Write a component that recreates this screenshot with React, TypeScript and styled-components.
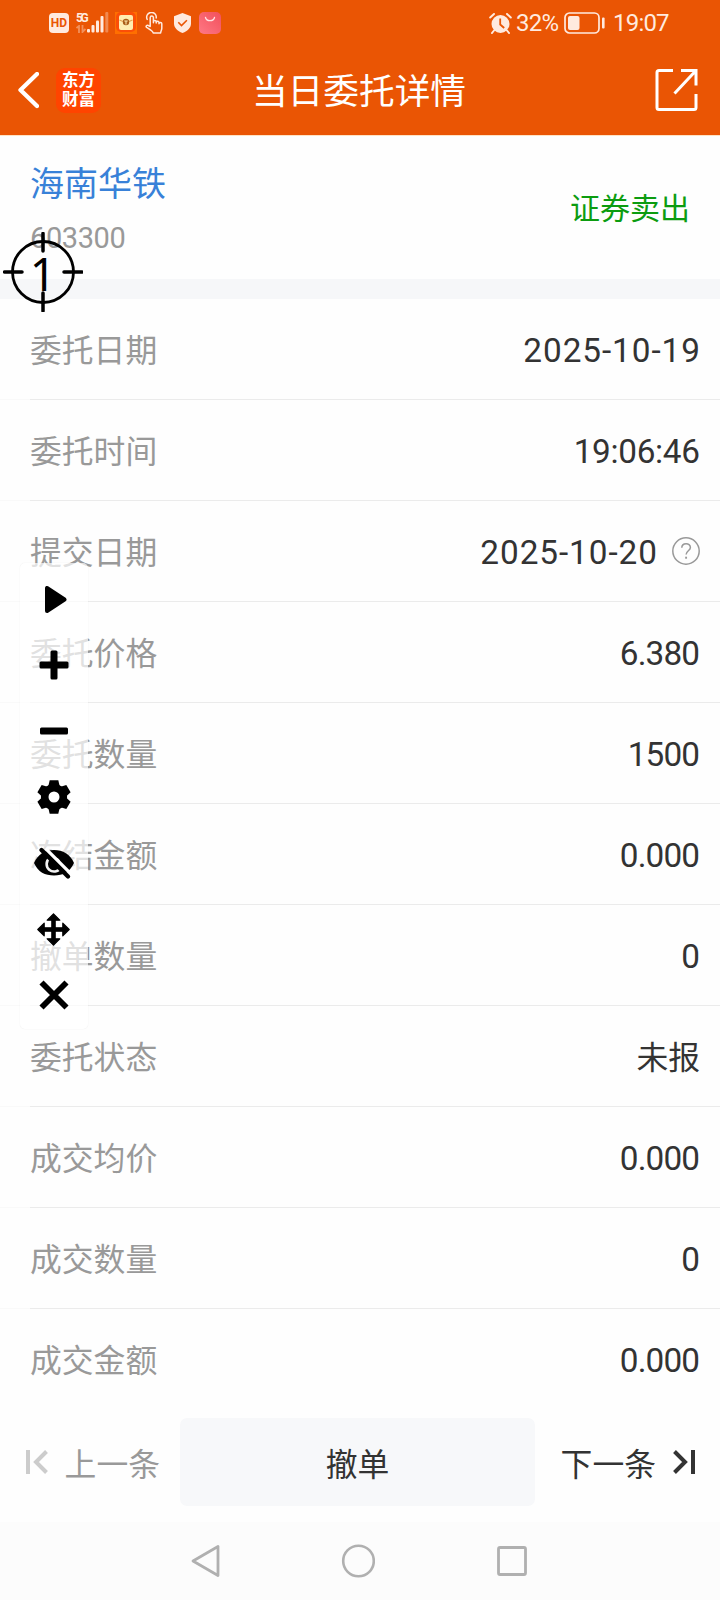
import React from 'react';
import styled, { createGlobalStyle } from 'styled-components';

const GlobalStyle = createGlobalStyle`
  * { box-sizing: border-box; }
  body {
    margin: 0;
    background: #fff;
    font-family: Roboto, "Noto Sans CJK SC", sans-serif;
  }
  svg { display: block; flex: none; }
`;

const Screen = styled.div`
  position: relative;
  width: 720px;
  height: 1600px;
  display: flex;
  flex-direction: column;
  background: #fefefe;
  overflow: hidden;
`;

const Header = styled.header`
  height: 135px;
  flex: none;
  background: #ea5504;
  color: #fff;
`;

const StatusBar = styled.div`
  height: 46px;
  padding: 0 50px 0 49px;
  display: flex;
  justify-content: space-between;
  align-items: center;
  color: #ffeadf;
`;

const StatusIcons = styled.div`
  display: flex;
  align-items: center;
`;

const StatusGap = styled.span<{ $w: number }>`
  width: ${(p) => p.$w}px;
`;

const HdBadge = styled.span`
  width: 20px;
  height: 20px;
  border-radius: 4px;
  background: #ffeadf;
  color: #ea5504;
  font-size: 12px;
  font-weight: 700;
  line-height: 21px;
  text-align: center;
`;

const Network = styled.span`
  display: flex;
  flex-direction: column;
  width: 11px;
  height: 23px;
  font-size: 12px;
  font-weight: 700;
  line-height: 13px;
  letter-spacing: -2.4px;
`;

const StatusText = styled.span<{ $w: number }>`
  width: ${(p) => p.$w}px;
  font-size: 24px;
  line-height: 46px;
  letter-spacing: -0.8px;
  white-space: nowrap;
`;

const TitleBar = styled.div`
  height: 89px;
  padding: 0 22px 1px 18px;
  display: grid;
  grid-template-columns: 180px 1fr 180px;
  align-items: center;
`;

const TitleLeft = styled.div`
  display: flex;
  align-items: center;
  gap: 17px;
`;

const TitleRight = styled.div`
  display: flex;
  justify-content: flex-end;
`;

const BrandLogo = styled.div`
  width: 45px;
  height: 45px;
  border-radius: 9px;
  background: #ff4400;
  font-family: "Noto Sans CJK SC", sans-serif;
  font-size: 16.5px;
  font-weight: 700;
  line-height: 19px;
  text-align: center;
  padding-top: 2px;
`;

const Title = styled.h1`
  margin: 0;
  padding: 4px 0 0 2px;
  font-size: 35.7px;
  font-weight: 400;
  line-height: 50px;
  text-align: center;
  white-space: nowrap;
`;

const Stock = styled.section`
  height: 144px;
  flex: none;
  padding: 0 30px;
  border-top: 1px solid #ffe3c4;
  display: flex;
  justify-content: space-between;
  align-items: center;
`;

const StockName = styled.div`
  padding-top: 2px;
  color: #3881d8;
  font-size: 34px;
  line-height: 50px;
`;

const StockCode = styled.div`
  margin-top: 8px;
  color: #999;
  font-size: 29px;
  line-height: 42px;
  letter-spacing: -0.4px;
`;

const Side = styled.div`
  padding-top: 2px;
  color: #0c9c10;
  font-size: 30px;
  line-height: 44px;
`;

const Divider = styled.div`
  height: 20px;
  flex: none;
  background: #f6f7f9;
`;

const List = styled.dl`
  margin: 0;
  flex: none;
`;

const Row = styled.div`
  height: 101px;
  padding: 2px 20px 0 30px;
  display: flex;
  align-items: center;
  justify-content: space-between;
  background: linear-gradient(90deg, #f9f9f9 30px, #ebebeb 30px) bottom / 100% 1px no-repeat;
  &:last-child { background: none; }
`;

const Label = styled.dt`
  color: #999;
  font-size: 31.8px;
  line-height: 46px;
`;

const Value = styled.dd`
  margin: 0;
  display: flex;
  align-items: center;
  gap: 15px;
  color: #333;
  line-height: 46px;
`;

const spacing = { date: 0.95, time: -0.3, number: -0.85, word: 0 };

const ValueText = styled.span<{ $kind: keyof typeof spacing }>`
  font-size: ${(p) => (p.$kind === 'word' ? 31.8 : 33.3)}px;
  letter-spacing: ${(p) => spacing[p.$kind]}px;
  margin-right: ${(p) => -spacing[p.$kind]}px;
`;

const HelpButton = styled.span`
  padding-bottom: 3px;
`;

const Actions = styled.div`
  height: 112px;
  flex: none;
  padding-top: 8px;
  display: grid;
  grid-template-columns: 180px 355px 185px;
  grid-template-rows: 88px;
  font-size: 31.8px;
`;

const Pager = styled.div<{ $muted?: boolean }>`
  display: flex;
  align-items: center;
  justify-content: flex-end;
  padding-right: ${(p) => (p.$muted ? 20 : 25)}px;
  gap: 17px;
  color: ${(p) => (p.$muted ? '#999' : '#333')};
  white-space: nowrap;
`;

const CancelButton = styled.button`
  border: 0;
  padding: 0;
  border-radius: 7px;
  background: #f7f8fa;
  color: #333;
  font: inherit;
`;

const NavBar = styled.nav`
  flex: 1;
  padding: 0 192px 0 190px;
  display: flex;
  align-items: center;
  justify-content: space-between;
  background: #fcfcfc;
`;

const ToolPanel = styled.div`
  position: absolute;
  left: 20px;
  top: 563px;
  width: 68px;
  height: 466px;
  padding: 3px 1px 0 0;
  border-radius: 5px;
  background: rgba(255, 255, 255, 0.7);
  box-shadow: 0 0 1px rgba(0, 0, 0, 0.12);
`;

const Tool = styled.div`
  height: 66px;
  display: flex;
  align-items: center;
  justify-content: center;
  color: #000;
`;

const Target = styled.div`
  position: absolute;
  left: 3px;
  top: 232px;
  width: 80px;
  height: 80px;
  svg { position: absolute; inset: 0; }
`;

const TargetNumber = styled.span`
  display: block;
  width: 80px;
  color: #000;
  font-family: "Noto Sans", sans-serif;
  font-size: 46px;
  line-height: 82px;
  text-align: center;
`;

const rows: { label: string; value: string; kind: keyof typeof spacing; help?: boolean }[] = [
  { label: '委托日期', value: '2025-10-19', kind: 'date' },
  { label: '委托时间', value: '19:06:46', kind: 'time' },
  { label: '提交日期', value: '2025-10-20', kind: 'date', help: true },
  { label: '委托价格', value: '6.380', kind: 'number' },
  { label: '委托数量', value: '1500', kind: 'number' },
  { label: '冻结金额', value: '0.000', kind: 'number' },
  { label: '撤单数量', value: '0', kind: 'number' },
  { label: '委托状态', value: '未报', kind: 'word' },
  { label: '成交均价', value: '0.000', kind: 'number' },
  { label: '成交数量', value: '0', kind: 'number' },
  { label: '成交金额', value: '0.000', kind: 'number' },
];

const Signal = () => (
  <svg width="22" height="22" viewBox="0 0 22 22" fill="currentColor">
    <rect x="0" y="17" width="3" height="3.5" rx="1" />
    <rect x="4.5" y="13" width="3" height="7.5" rx="1" />
    <rect x="9" y="8.5" width="3" height="12" rx="1" />
    <rect x="13.5" y="4" width="3" height="16.5" rx="1" />
    <rect x="18.3" y="0" width="3" height="20.5" rx="1" opacity=".35" />
  </svg>
);

const DataArrows = () => (
  <svg width="10" height="8" viewBox="0 0 10 8" fill="none" stroke="currentColor" strokeWidth="1.8" opacity=".4">
    <path d="M.5 3 3 1v7M6.5 0v7l3-3" />
  </svg>
);

const EnvelopeApp = () => (
  <svg width="22" height="22" viewBox="0 0 22 22">
    <rect width="22" height="22" fill="#ff6f00" />
    <rect x="1" y="0" width="20" height="20" rx="5" fill="#fb4e08" />
    <rect x="4" y="3" width="14" height="15" rx="2" fill="#ffedb0" />
    <path d="M4.500 8 8 9.500M17.500 8 14 9.500" stroke="#e8a250" strokeWidth="1.200" />
    <circle cx="11" cy="10" r="3.200" fill="#a95d18" />
    <path d="M9.300 9h3.400M11 9v3.600" stroke="#ffe7a8" strokeWidth="1.100" />
  </svg>
);

const TouchHand = () => (
  <svg width="18" height="22" viewBox="0 0 18 22" fill="none" stroke="currentColor" strokeWidth="1.5" strokeLinecap="round" strokeLinejoin="round">
    <path d="M2.200 7.400A4.800 4.800 0 1 1 11.200 6" />
    <path d="M5.200 14.500V5.700a1.600 1.600 0 0 1 3.200 0v5-1a1.400 1.400 0 0 1 2.800.2v1-.4a1.400 1.400 0 0 1 2.800.2v1a1.400 1.400 0 0 1 2.800.2v4.300c0 1.800-1 2.500-1.200 4.800H8.200c-.3-2-3-3.400-6.700-5.700-1-.9.3-2.500 1.600-1.900Z" />
  </svg>
);

const Shield = () => (
  <svg width="17" height="20" viewBox="0 0 17 20">
    <path d="M8.500 0 17 3.200v7c0 4.500-3.200 7.700-8.500 9.800C3.200 17.900 0 14.700 0 10.200v-7Z" fill="currentColor" />
    <path d="m4.300 9.300 3.200 3.200 5.400-5.300" fill="none" stroke="#ea5504" strokeWidth="1.600" />
  </svg>
);

const ShoppingApp = () => (
  <svg width="22" height="22" viewBox="0 0 22 22">
    <defs>
      <linearGradient id="bag" x1="1" y1="0" x2="0" y2="1">
        <stop offset="0" stopColor="#f2505c" />
        <stop offset="1" stopColor="#ff7884" />
      </linearGradient>
    </defs>
    <rect width="22" height="22" rx="5" fill="url(#bag)" />
    <path d="M6.500 5.500c1 4.200 8 4.200 9 0" fill="none" stroke="#ffe3e3" strokeWidth="1.300" strokeLinecap="round" />
  </svg>
);

const Alarm = () => (
  <svg width="23" height="21" viewBox="0 0 23 21">
    <circle cx="11.500" cy="11" r="9" fill="currentColor" />
    <path d="M1.200 4.500 5 1M21.800 4.500 18 1M5 17.500l-2 2.500M18 17.500l2 2.500" stroke="currentColor" strokeWidth="2" strokeLinecap="round" />
    <path d="M11.200 5.500v6l4 3.500" fill="none" stroke="#ea5504" strokeWidth="1.800" />
  </svg>
);

const Battery = () => (
  <svg width="42" height="22" viewBox="0 0 42 22">
    <rect x="1" y="1" width="34" height="20" rx="4.500" fill="none" stroke="currentColor" strokeWidth="1.700" />
    <rect x="4" y="4" width="11.500" height="14" rx="2" fill="currentColor" />
    <rect x="38" y="5.500" width="2.600" height="11" rx="1" fill="currentColor" />
  </svg>
);

const Back = () => (
  <svg width="21" height="37" viewBox="0 0 21 37" fill="none" stroke="currentColor" strokeWidth="4.300" strokeLinecap="round" strokeLinejoin="round">
    <path d="M19 2 2.500 18 19 34" />
  </svg>
);

const Share = () => (
  <svg width="43" height="43" viewBox="0 0 43 43" fill="none" stroke="currentColor" strokeWidth="3" strokeLinejoin="round">
    <path d="M18 1.500H4Q2 1.500 2 3.500v35q0 2 2 2h35q2 0 2-2V25" />
    <path d="M26 1.500h15v15M41 1.500 19.500 24.500" strokeLinejoin="miter" />
  </svg>
);

const Help = () => (
  <svg width="28" height="28" viewBox="0 0 28 28" fill="none" stroke="#999" strokeWidth="1.500">
    <circle cx="14" cy="14" r="13.200" />
    <path d="M9.800 10.800c0-5.400 8.600-5.400 8.600-.4 0 3.300-4.300 3.500-4.300 7.200" />
    <path d="M14.100 19.700v2" strokeWidth="1.900" />
  </svg>
);

const First = () => (
  <svg width="22" height="24" viewBox="0 0 22 24" fill="none" stroke="#ccc" strokeWidth="4">
    <path d="M2 0v24M20.500 1.500 10 12l10.500 10.500" />
  </svg>
);

const Last = () => (
  <svg width="22" height="24" viewBox="0 0 22 24" fill="none" stroke="#333" strokeWidth="4">
    <path d="M20 0v24M1.500 1.500 12 12 1.500 22.500" />
  </svg>
);

const Play = () => (
  <svg width="27" height="27" viewBox="0 0 27 27" stroke="#000" strokeWidth="4" strokeLinejoin="round">
    <path d="M7 2v23L24.500 13.500Z" />
  </svg>
);

const Plus = () => (
  <svg width="30" height="30" viewBox="0 0 30 30">
    <rect x=".5" y="11.500" width="29" height="7" rx="1.500" />
    <rect x="11.500" y=".5" width="7" height="29" rx="1.500" />
  </svg>
);

const Minus = () => (
  <svg width="30" height="30" viewBox="0 0 30 30">
    <rect x="1" y="11.500" width="28" height="7" rx="1.500" />
  </svg>
);

const Gear = () => (
  <svg width="34" height="34" viewBox="-17 -17 34 34">
    <circle r="9.300" fill="none" stroke="#000" strokeWidth="7.600" />
    {[0, 60, 120, 180, 240, 300].map((a) => (
      <path key={a} d="M-4.300-16.700h8.600l1.600 6.700H-5.900Z" transform={`rotate(${a})`} />
    ))}
  </svg>
);

const EyeOff = () => (
  <svg width="42" height="32" viewBox="0 0 42 32" fill="none">
    <path d="M1 16C5 7 12 3 21 3s16 4 20 13c-4 9-11 12.500-20 12.500S5 25 1 16Z" fill="#000" />
    <path d="M16.300 11.300a7.500 7.500 0 1 0 11.200 9.700" stroke="#f2f2f2" strokeWidth="2.600" />
    <path d="M22 11.300a5 5 0 0 1 4.500 4.400" stroke="#f2f2f2" strokeWidth="1.800" />
    <path d="M12.500 1.500 39 28" stroke="#fff" strokeWidth="3.200" />
    <path d="M8.500 3 35 29.500" stroke="#000" strokeWidth="4.200" strokeLinecap="round" />
  </svg>
);

const Move = () => (
  <svg width="33" height="33" viewBox="-16.500 -16.500 33 33">
    <rect x="-2.300" y="-12" width="4.600" height="24" />
    <rect x="-12" y="-2.300" width="24" height="4.600" />
    {[0, 90, 180, 270].map((a) => (
      <path
        key={a}
        d="M0-15.700 6.300-9.300H-6.300Z"
        stroke="#000"
        strokeWidth="1.200"
        strokeLinejoin="round"
        transform={`rotate(${a})`}
      />
    ))}
  </svg>
);

const Close = () => (
  <svg width="30" height="30" viewBox="0 0 30 30" stroke="#000" strokeWidth="5.800">
    <path d="m2.500 2.500 25 25M27.500 2.500l-25 25" />
  </svg>
);

const tools = [Play, Plus, Minus, Gear, EyeOff, Move, Close];

export default function App() {
  return (
    <Screen>
      <GlobalStyle />
      <Header>
        <StatusBar>
          <StatusIcons>
            <HdBadge>HD</HdBadge>
            <StatusGap $w={7} />
            <Network>
              5G
              <DataArrows />
            </Network>
            <Signal />
            <StatusGap $w={6} />
            <EnvelopeApp />
            <StatusGap $w={8} />
            <TouchHand />
            <StatusGap $w={11} />
            <Shield />
            <StatusGap $w={8} />
            <ShoppingApp />
          </StatusIcons>
          <StatusIcons>
            <Alarm />
            <StatusGap $w={4} />
            <StatusText $w={48}>32%</StatusText>
            <Battery />
            <StatusGap $w={7} />
            <StatusText $w={57}>19:07</StatusText>
          </StatusIcons>
        </StatusBar>
        <TitleBar>
          <TitleLeft>
            <Back />
            <BrandLogo>
              东方
              <br />
              财富
            </BrandLogo>
          </TitleLeft>
          <Title>当日委托详情</Title>
          <TitleRight>
            <Share />
          </TitleRight>
        </TitleBar>
      </Header>

      <Stock>
        <div>
          <StockName>海南华铁</StockName>
          <StockCode>603300</StockCode>
        </div>
        <Side>证券卖出</Side>
      </Stock>
      <Divider />

      <List>
        {rows.map((r) => (
          <Row key={r.label}>
            <Label>{r.label}</Label>
            <Value>
              <ValueText $kind={r.kind}>{r.value}</ValueText>
              {r.help && (
                <HelpButton>
                  <Help />
                </HelpButton>
              )}
            </Value>
          </Row>
        ))}
      </List>

      <Actions>
        <Pager $muted>
          <First />
          上一条
        </Pager>
        <CancelButton>撤单</CancelButton>
        <Pager>
          下一条
          <Last />
        </Pager>
      </Actions>

      <NavBar>
        <svg width="30" height="34" viewBox="0 0 30 34" fill="none" stroke="#b0b0b0" strokeWidth="2.800" strokeLinejoin="round">
          <path d="M28 2.500v29L3 17Z" />
        </svg>
        <svg width="34" height="34" viewBox="0 0 34 34" fill="none" stroke="#b0b0b0" strokeWidth="2.600">
          <circle cx="17.500" cy="17" r="15.300" />
        </svg>
        <svg width="32" height="32" viewBox="0 0 32 32" fill="none" stroke="#b0b0b0" strokeWidth="2.800">
          <rect x="2.500" y="2.500" width="27" height="27" rx="1.500" />
        </svg>
      </NavBar>

      <ToolPanel>
        {tools.map((Icon, i) => (
          <Tool key={i}>
            <Icon />
          </Tool>
        ))}
      </ToolPanel>

      <Target>
        <svg width="80" height="80" viewBox="0 0 80 80" fill="none" stroke="#000">
          <circle cx="40" cy="40" r="30.500" strokeWidth="2.800" />
          <path d="M1.500 40H19M61 40h18M40 1.500V19M40 61v18" strokeWidth="3.500" strokeLinecap="round" />
        </svg>
        <TargetNumber>1</TargetNumber>
      </Target>
    </Screen>
  );
}
